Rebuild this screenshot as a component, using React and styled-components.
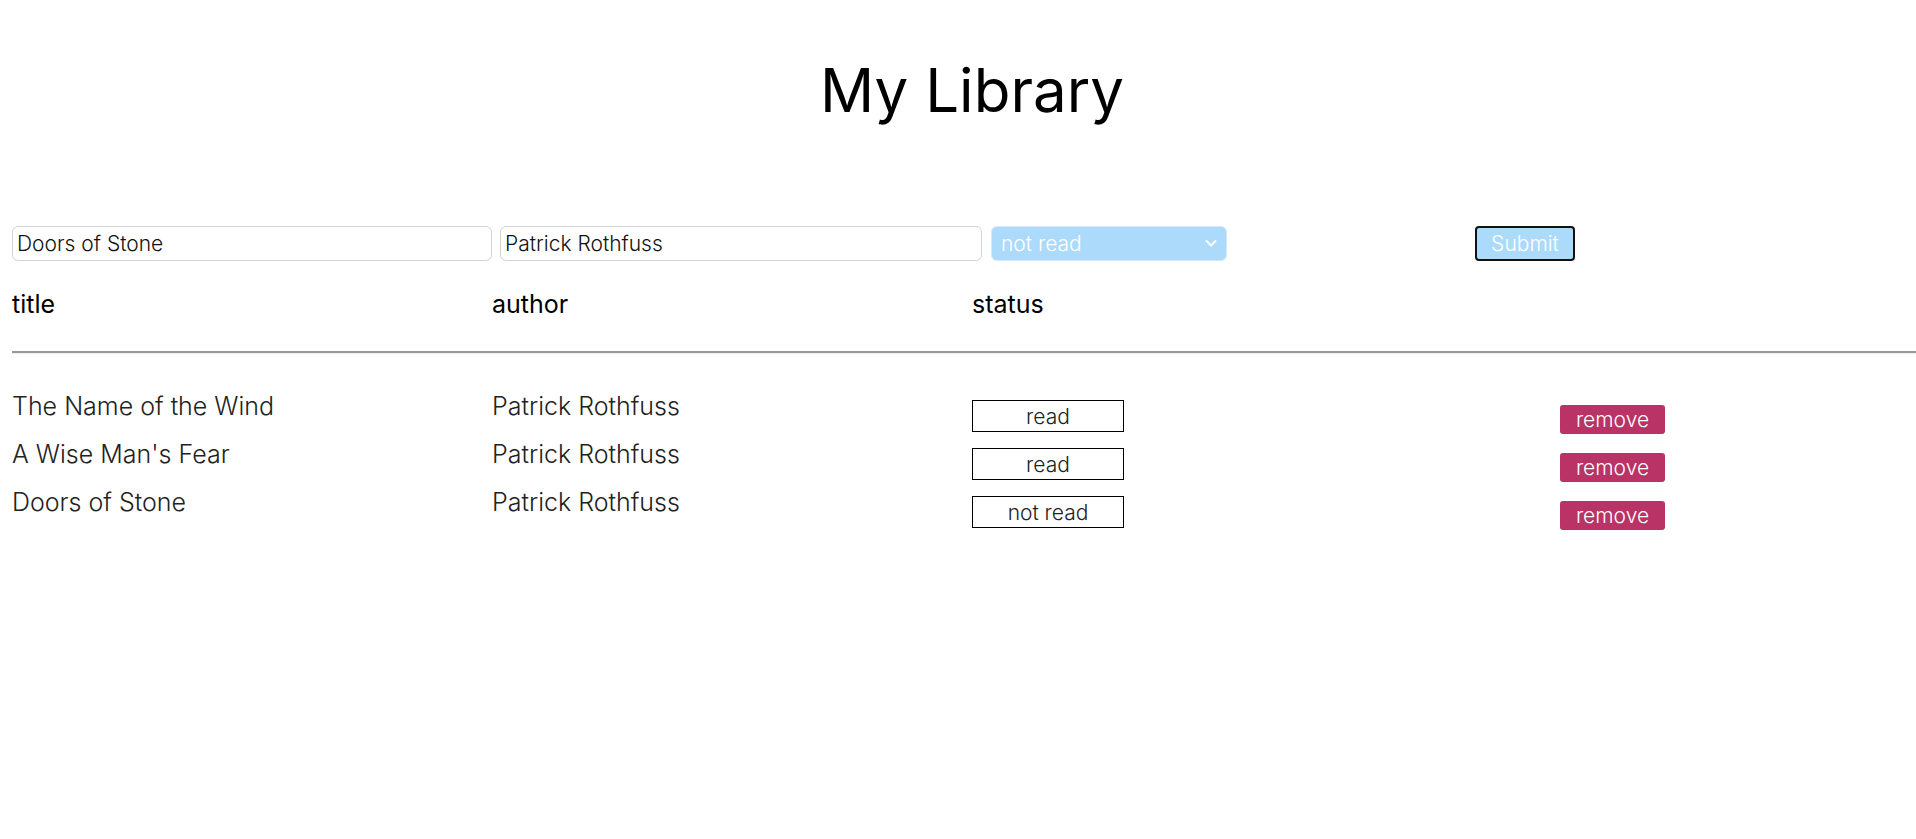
import React from 'react';
import styled, { createGlobalStyle } from 'styled-components';

const GlobalStyle = createGlobalStyle`
  body {
    margin: 0;
    background: #fff;
    font-family: "Inter", "Open Sans", sans-serif;
    color: #000;
  }
`;

const Page = styled.div`
  padding: 0 12px;
  min-height: 100vh;
  box-sizing: border-box;
`;

const Heading = styled.h1`
  margin: 0;
  padding: 54px 0 0 28px;
  height: 226px;
  box-sizing: border-box;
  text-align: center;
  font-size: 60px;
  line-height: normal;
  font-weight: 400;
`;

const Form = styled.form`
  display: flex;
  align-items: center;
  gap: 8px;
  height: 35px;
`;

const TextInput = styled.input`
  box-sizing: border-box;
  width: ${p => p.w}px;
  height: 35px;
  border: 1px solid #d4d4d4;
  border-radius: 6px;
  padding: 0 4px;
  font-family: inherit;
  font-weight: 300;
  font-size: 21px;
  color: #111;
  outline: none;
`;

const SelectWrap = styled.div`
  position: relative;
  width: 236px;
  height: 35px;
  margin-left: 1px;
`;

const Select = styled.select`
  appearance: none;
  width: 100%;
  height: 100%;
  border: 1px solid #d8e8f4;
  border-radius: 6px;
  background: #acdafa;
  color: #fff;
  font-family: inherit;
  font-weight: 300;
  font-size: 21px;
  padding: 0 9px;
  outline: none;
`;

const Chevron = styled.svg`
  position: absolute;
  right: 9px;
  top: 12px;
  pointer-events: none;
`;

const Submit = styled.button`
  margin-left: 240px;
  box-sizing: border-box;
  width: 100px;
  height: 35px;
  border: 2px solid #111;
  border-radius: 4px;
  background: #acdafa;
  color: #fff;
  font-family: inherit;
  font-weight: 300;
  font-size: 21px;
  padding: 0;
`;

const Grid = styled.div`
  display: grid;
  grid-template-columns: 480px 480px 588px auto;
`;

const HeaderCell = styled.div`
  font-size: 25px;
  font-weight: 400;
  padding-top: 29px;
  line-height: 28px;
`;

const Divider = styled.hr`
  margin: 33px -12px 26px 0;
  border: 0;
  border-top: 2px solid #999;
  border-bottom: 1px solid #eee;
`;

const Cell = styled.div`
  font-size: 25px;
  font-weight: 300;
  color: #222;
  height: 48px;
  line-height: 28px;
  padding-top: 12px;
  box-sizing: border-box;
`;

const StatusBox = styled.button`
  display: block;
  box-sizing: border-box;
  width: 152px;
  height: 32px;
  border: 1.5px solid #000;
  background: #fff;
  font-family: inherit;
  font-weight: 300;
  font-size: 21px;
  color: #222;
  padding: 0;
  margin-top: 8px;
`;

const RemoveButton = styled.button`
  display: block;
  box-sizing: border-box;
  width: 105px;
  height: 29px;
  border: 0;
  border-radius: 3px;
  background: #b93366;
  color: #fff;
  font-family: inherit;
  font-weight: 300;
  font-size: 21px;
  padding: 0;
  margin-top: 13px;
`;

const books = [
  { title: 'The Name of the Wind', author: 'Patrick Rothfuss', status: 'read' },
  { title: "A Wise Man's Fear", author: 'Patrick Rothfuss', status: 'read' },
  { title: 'Doors of Stone', author: 'Patrick Rothfuss', status: 'not read' },
];

export default function App() {
  return (
    <Page>
      <GlobalStyle />
      <Heading>My Library</Heading>
      <Form onSubmit={e => e.preventDefault()}>
        <TextInput w={480} defaultValue="Doors of Stone" />
        <TextInput w={482} defaultValue="Patrick Rothfuss" />
        <SelectWrap>
          <Select defaultValue="not read">
            <option value="read">read</option>
            <option value="not read">not read</option>
          </Select>
          <Chevron width="14" height="10" viewBox="0 0 14 10">
            <path d="M2 2.5 L7 7.5 L12 2.5" fill="none" stroke="#fff" strokeWidth="2" />
          </Chevron>
        </SelectWrap>
        <Submit type="submit">Submit</Submit>
      </Form>
      <Grid>
        <HeaderCell>title</HeaderCell>
        <HeaderCell>author</HeaderCell>
        <HeaderCell>status</HeaderCell>
        <HeaderCell />
      </Grid>
      <Divider />
      <Grid>
        {books.map(b => (
          <React.Fragment key={b.title}>
            <Cell>{b.title}</Cell>
            <Cell>{b.author}</Cell>
            <Cell><StatusBox>{b.status}</StatusBox></Cell>
            <Cell><RemoveButton>remove</RemoveButton></Cell>
          </React.Fragment>
        ))}
      </Grid>
    </Page>
  );
}
